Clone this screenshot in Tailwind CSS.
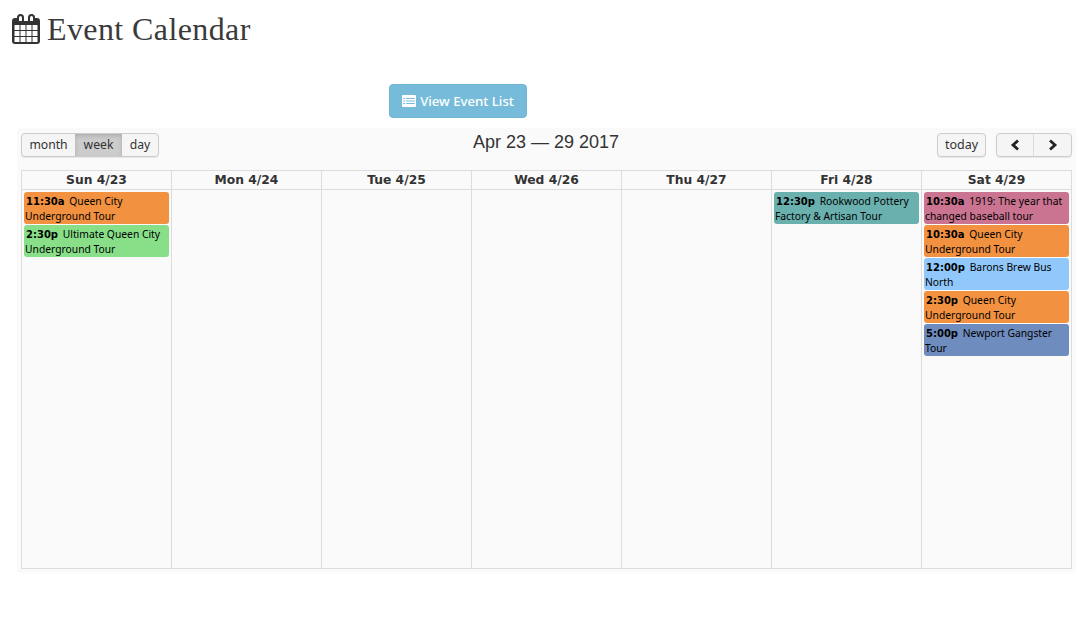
<!DOCTYPE html>
<html><head><meta charset="utf-8"><script src="https://cdn.jsdelivr.net/npm/@tailwindcss/browser@4"></script></head>
<body class="bg-white w-[1084px] h-[637px] overflow-hidden font-['Noto_Sans',sans-serif] text-[#333]">
<div class="flex items-start gap-[7px] pl-[12px] pt-[11px] h-[84px]">
  <svg class="w-[28px] h-[30px] mt-[3px]" viewBox="0 0 28 30"><path fill="#333" fill-rule="evenodd" d="M3 4h3.500v3h15V4H25a3 3 0 0 1 3 3v20a3 3 0 0 1-3 3H3a3 3 0 0 1-3-3V7a3 3 0 0 1 3-3zM2.500 11v5h5v-5zm6 0v5h5v-5zm6 0v5h5v-5zm6 0v5h5v-5zM2.500 17v5h5v-5zm6 0v5h5v-5zm6 0v5h5v-5zm6 0v5h5v-5zM2.500 23v5h5v-5zm6 0v5h5v-5zm6 0v5h5v-5zm6 0v5h5v-5z"/><path fill="#fff" stroke="#333" stroke-width="2" d="M6 8V3.500a2.500 2.500 0 0 1 5 0V8zM17 8V3.500a2.500 2.500 0 0 1 5 0V8z"/></svg>
  <h1 class="font-['Liberation_Serif',serif] text-[32px] leading-[36px] text-[#3a3a3a] tracking-[0.4px]">Event Calendar</h1>
</div>
<div class="pl-[389px] h-[44px]">
  <button class="h-[34px] w-[138px] rounded-[4px] bg-[#76bcda] border border-[#6fb6d4] text-white text-[13.2px] leading-[32px] font-medium flex items-center justify-center gap-[4px]">
    <svg class="w-[14px] h-[12px]" viewBox="0 0 14 12"><path fill="#fff" fill-rule="evenodd" d="M1 0h12a1 1 0 0 1 1 1v10a1 1 0 0 1-1 1H1a1 1 0 0 1-1-1V1a1 1 0 0 1 1-1zm.200 3v1h2V3zm3 0v1h8.600V3zm-3 2.500v1h2v-1zm3 0v1h8.600v-1zm-3 2.500v1h2V8zm3 0v1h8.600V8z"/></svg>
    <span class="-mt-[1px]">View Event List</span>
  </button>
</div>
<div class="ml-[17px] w-[1059px] h-[445px] bg-[#fafafa] rounded-[4px] px-[4px] pt-[5px]">
  <div class="flex justify-between h-[37px]">
    <div class="flex h-[24px] text-[12.2px] text-[#333] rounded-[4px] border border-[#ccc] overflow-hidden bg-[#f5f5f5] shadow-[0_1px_1px_rgba(0,0,0,0.08)]">
      <span class="w-[53px] flex items-center justify-center">month</span>
      <span class="w-[47px] flex items-center justify-center bg-[#cccccc] shadow-[inset_0_2px_4px_rgba(0,0,0,0.15)]">week</span>
      <span class="w-[36px] flex items-center justify-center">day</span>
    </div>
    <div class="font-['Liberation_Sans',sans-serif] text-[18px] leading-[20px] text-[#333] -mt-[1px] mr-[4px]">Apr 23 — 29 2017</div>
    <div class="flex gap-[10px]">
      <div class="h-[24px] w-[49px] flex items-center justify-center text-[12.5px] rounded-[4px] border border-[#ccc] bg-[#f5f5f5] shadow-[0_1px_1px_rgba(0,0,0,0.08)]">today</div>
      <div class="flex h-[24px] w-[76px] rounded-[4px] border border-[#ccc] bg-[#f5f5f5] shadow-[0_1px_1px_rgba(0,0,0,0.08)]">
        <span class="w-[38px] flex items-center justify-center border-r border-[#ddd]"><svg class="w-[10px] h-[12px]" viewBox="0 0 10 12"><path fill="none" stroke="#222" stroke-width="2.800" d="M8 1.500L3 6l5 4.500"/></svg></span>
        <span class="w-[37px] flex items-center justify-center"><svg class="w-[10px] h-[12px]" viewBox="0 0 10 12"><path fill="none" stroke="#222" stroke-width="2.800" d="M2 1.500L7 6l-5 4.500"/></svg></span>
      </div>
    </div>
  </div>
  <div class="grid grid-cols-[151px_150px_150px_150px_150px_150px_150px] w-[1051px] h-[399px] text-[#333]">
    <div class="border border-[#ddd] h-[20px] flex items-center justify-center font-['DejaVu_Sans',sans-serif] text-[12.3px] font-bold">Sun 4/23</div>
    <div class="border border-l-0 border-[#ddd] h-[20px] flex items-center justify-center font-['DejaVu_Sans',sans-serif] text-[12.3px] font-bold">Mon 4/24</div>
    <div class="border border-l-0 border-[#ddd] h-[20px] flex items-center justify-center font-['DejaVu_Sans',sans-serif] text-[12.3px] font-bold">Tue 4/25</div>
    <div class="border border-l-0 border-[#ddd] h-[20px] flex items-center justify-center font-['DejaVu_Sans',sans-serif] text-[12.3px] font-bold">Wed 4/26</div>
    <div class="border border-l-0 border-[#ddd] h-[20px] flex items-center justify-center font-['DejaVu_Sans',sans-serif] text-[12.3px] font-bold">Thu 4/27</div>
    <div class="border border-l-0 border-[#ddd] h-[20px] flex items-center justify-center font-['DejaVu_Sans',sans-serif] text-[12.3px] font-bold">Fri 4/28</div>
    <div class="border border-l-0 border-[#ddd] h-[20px] flex items-center justify-center font-['DejaVu_Sans',sans-serif] text-[12.3px] font-bold">Sat 4/29</div>

    <div class="border border-t-0 border-[#ddd] h-[379px] px-[2px] pt-[2px] flex flex-col gap-[1px]">
      <div class="h-[32px] rounded-[3px] bg-[#f29140] text-[10.3px] leading-[15px] text-black px-[1px] pt-[2px]"><b class="font-['DejaVu_Sans',sans-serif] text-[10px] pl-[1px] pr-[2px]">11:30a</b> Queen City Underground Tour</div>
      <div class="h-[32px] rounded-[3px] bg-[#88df88] text-[10.3px] leading-[15px] text-black px-[1px] pt-[2px]"><b class="font-['DejaVu_Sans',sans-serif] text-[10px] pl-[1px] pr-[2px]">2:30p</b> Ultimate Queen City Underground Tour</div>
    </div>
    <div class="border border-t-0 border-l-0 border-[#ddd] h-[379px]"></div>
    <div class="border border-t-0 border-l-0 border-[#ddd] h-[379px]"></div>
    <div class="border border-t-0 border-l-0 border-[#ddd] h-[379px]"></div>
    <div class="border border-t-0 border-l-0 border-[#ddd] h-[379px]"></div>
    <div class="border border-t-0 border-l-0 border-[#ddd] h-[379px] px-[2px] pt-[2px] flex flex-col gap-[1px]">
      <div class="h-[32px] rounded-[3px] bg-[#69b0ae] text-[10.3px] leading-[15px] text-black px-[1px] pt-[2px]"><b class="font-['DejaVu_Sans',sans-serif] text-[10px] pl-[1px] pr-[2px]">12:30p</b> Rookwood Pottery Factory &amp; Artisan Tour</div>
    </div>
    <div class="border border-t-0 border-l-0 border-[#ddd] h-[379px] px-[2px] pt-[2px] flex flex-col gap-[1px]">
      <div class="h-[32px] rounded-[3px] bg-[#cb7491] text-[10.3px] leading-[15px] text-black px-[1px] pt-[2px]"><b class="font-['DejaVu_Sans',sans-serif] text-[10px] pl-[1px] pr-[2px]">10:30a</b> 1919: The year that changed baseball tour</div>
      <div class="h-[32px] rounded-[3px] bg-[#f29140] text-[10.3px] leading-[15px] text-black px-[1px] pt-[2px]"><b class="font-['DejaVu_Sans',sans-serif] text-[10px] pl-[1px] pr-[2px]">10:30a</b> Queen City Underground Tour</div>
      <div class="h-[32px] rounded-[3px] bg-[#90c8fb] text-[10.3px] leading-[15px] text-black px-[1px] pt-[2px]"><b class="font-['DejaVu_Sans',sans-serif] text-[10px] pl-[1px] pr-[2px]">12:00p</b> Barons Brew Bus North</div>
      <div class="h-[32px] rounded-[3px] bg-[#f29140] text-[10.3px] leading-[15px] text-black px-[1px] pt-[2px]"><b class="font-['DejaVu_Sans',sans-serif] text-[10px] pl-[1px] pr-[2px]">2:30p</b> Queen City Underground Tour</div>
      <div class="h-[32px] rounded-[3px] bg-[#6f8cbf] text-[10.3px] leading-[15px] text-black px-[1px] pt-[2px]"><b class="font-['DejaVu_Sans',sans-serif] text-[10px] pl-[1px] pr-[2px]">5:00p</b> Newport Gangster Tour</div>
    </div>
  </div>
</div>
</body></html>
